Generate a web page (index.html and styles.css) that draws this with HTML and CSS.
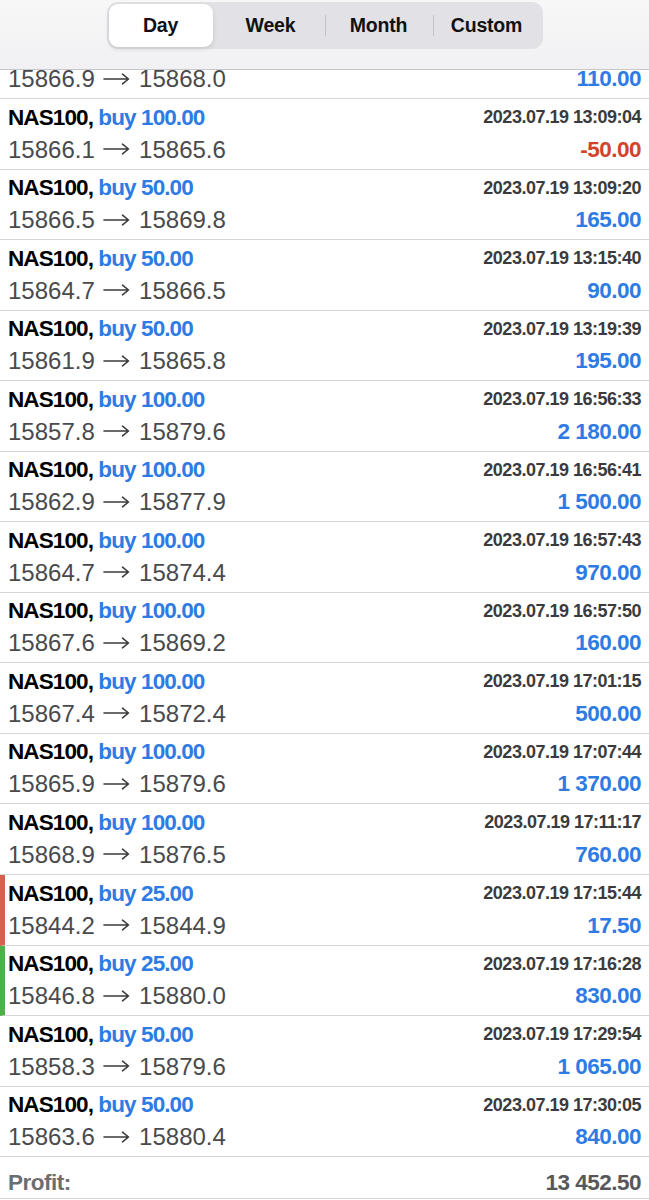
FILE: index.html
```html
<!DOCTYPE html>
<html lang="en">

<head>
    <meta charset="UTF-8">
    <meta name="viewport" content="width=device-width, initial-scale=1.0">
    <title>History</title>
    <link rel="stylesheet" href="styles.css">
</head>

<body>
    <div class="topbar">
        <div class="segments">
            <div class="segment active">Day</div>
            <div class="segment">Week</div>
            <div class="segment sep">Month</div>
            <div class="segment sep">Custom</div>
        </div>
    </div>

    <div class="list" id="list">
        <!-- top of this deal is scrolled under the bar -->
        <div class="deal partial">
            <div class="prices">15866.9 <span class="arrow"></span> 15868.0</div>
            <div class="profit">110.00</div>
        </div>
        <div class="deal">
            <div class="symbol">NAS100, <span class="side">buy 100.00</span></div>
            <div class="time">2023.07.19 13:09:04</div>
            <div class="prices">15866.1 <span class="arrow"></span> 15865.6</div>
            <div class="profit loss">-50.00</div>
        </div>
        <div class="deal">
            <div class="symbol">NAS100, <span class="side">buy 50.00</span></div>
            <div class="time">2023.07.19 13:09:20</div>
            <div class="prices">15866.5 <span class="arrow"></span> 15869.8</div>
            <div class="profit">165.00</div>
        </div>
        <div class="deal">
            <div class="symbol">NAS100, <span class="side">buy 50.00</span></div>
            <div class="time">2023.07.19 13:15:40</div>
            <div class="prices">15864.7 <span class="arrow"></span> 15866.5</div>
            <div class="profit">90.00</div>
        </div>
        <div class="deal">
            <div class="symbol">NAS100, <span class="side">buy 50.00</span></div>
            <div class="time">2023.07.19 13:19:39</div>
            <div class="prices">15861.9 <span class="arrow"></span> 15865.8</div>
            <div class="profit">195.00</div>
        </div>
        <div class="deal">
            <div class="symbol">NAS100, <span class="side">buy 100.00</span></div>
            <div class="time">2023.07.19 16:56:33</div>
            <div class="prices">15857.8 <span class="arrow"></span> 15879.6</div>
            <div class="profit">2 180.00</div>
        </div>
        <div class="deal">
            <div class="symbol">NAS100, <span class="side">buy 100.00</span></div>
            <div class="time">2023.07.19 16:56:41</div>
            <div class="prices">15862.9 <span class="arrow"></span> 15877.9</div>
            <div class="profit">1 500.00</div>
        </div>
        <div class="deal">
            <div class="symbol">NAS100, <span class="side">buy 100.00</span></div>
            <div class="time">2023.07.19 16:57:43</div>
            <div class="prices">15864.7 <span class="arrow"></span> 15874.4</div>
            <div class="profit">970.00</div>
        </div>
        <div class="deal">
            <div class="symbol">NAS100, <span class="side">buy 100.00</span></div>
            <div class="time">2023.07.19 16:57:50</div>
            <div class="prices">15867.6 <span class="arrow"></span> 15869.2</div>
            <div class="profit">160.00</div>
        </div>
        <div class="deal">
            <div class="symbol">NAS100, <span class="side">buy 100.00</span></div>
            <div class="time">2023.07.19 17:01:15</div>
            <div class="prices">15867.4 <span class="arrow"></span> 15872.4</div>
            <div class="profit">500.00</div>
        </div>
        <div class="deal">
            <div class="symbol">NAS100, <span class="side">buy 100.00</span></div>
            <div class="time">2023.07.19 17:07:44</div>
            <div class="prices">15865.9 <span class="arrow"></span> 15879.6</div>
            <div class="profit">1 370.00</div>
        </div>
        <div class="deal">
            <div class="symbol">NAS100, <span class="side">buy 100.00</span></div>
            <div class="time">2023.07.19 17:11:17</div>
            <div class="prices">15868.9 <span class="arrow"></span> 15876.5</div>
            <div class="profit">760.00</div>
        </div>
        <div class="deal mark-red">
            <div class="symbol">NAS100, <span class="side">buy 25.00</span></div>
            <div class="time">2023.07.19 17:15:44</div>
            <div class="prices">15844.2 <span class="arrow"></span> 15844.9</div>
            <div class="profit">17.50</div>
        </div>
        <div class="deal mark-green">
            <div class="symbol">NAS100, <span class="side">buy 25.00</span></div>
            <div class="time">2023.07.19 17:16:28</div>
            <div class="prices">15846.8 <span class="arrow"></span> 15880.0</div>
            <div class="profit">830.00</div>
        </div>
        <div class="deal">
            <div class="symbol">NAS100, <span class="side">buy 50.00</span></div>
            <div class="time">2023.07.19 17:29:54</div>
            <div class="prices">15858.3 <span class="arrow"></span> 15879.6</div>
            <div class="profit">1 065.00</div>
        </div>
        <div class="deal">
            <div class="symbol">NAS100, <span class="side">buy 50.00</span></div>
            <div class="time">2023.07.19 17:30:05</div>
            <div class="prices">15863.6 <span class="arrow"></span> 15880.4</div>
            <div class="profit">840.00</div>
        </div>
        <div class="total">
            <span class="total-label">Profit:</span>
            <span class="total-value">13 452.50</span>
        </div>
    </div>

    <script>
        // same thin arrow in every price line
        const arrowSvg = '<svg width="27" height="12" viewBox="0 0 27 12" fill="none" stroke="#3a3a3c" stroke-width="1.6" stroke-linecap="round" stroke-linejoin="round"><path d="M1 6 H25.5 M19.5 1.2 L25.5 6 L19.5 10.8"/></svg>';
        document.querySelectorAll('#list .arrow').forEach(el => {
            el.innerHTML = arrowSvg;
        });
    </script>
</body>

</html>
```

FILE: styles.css
```css
* {
    margin: 0;
    padding: 0;
    box-sizing: border-box;
}

body {
    font-family: 'Liberation Sans', Arial, sans-serif;
    background: #fff;
    color: #000;
    width: 649px;
    height: 1200px;
    overflow: hidden;
}

.topbar {
    height: 70px;
    background: linear-gradient(180deg, #f7f7f8 0%, #f1f1f3 100%);
    border-bottom: 1px solid #c8c8cc;
    display: flex;
    justify-content: center;
    padding-top: 2px;
}

.segments {
    width: 436px;
    height: 47px;
    background: #e2e2e6;
    border-radius: 11px;
    padding: 2px;
    display: grid;
    grid-template-columns: repeat(4, 1fr);
}

.segment {
    display: flex;
    align-items: center;
    justify-content: center;
    font-size: 19.5px;
    font-weight: bold;
    letter-spacing: -0.2px;
    color: #111;
    position: relative;
}

.segment.sep::before {
    content: "";
    position: absolute;
    left: 0;
    top: 11px;
    bottom: 11px;
    width: 1px;
    background: #c4c4c8;
}

.segment.active {
    background: #fff;
    border-radius: 9px;
    box-shadow: 0 2px 5px rgba(0, 0, 0, 0.12);
    margin-right: 4px;
}

.deal {
    height: 70.55px;
    border-bottom: 1px solid #d6d6d8;
    display: grid;
    grid-template-columns: 1fr auto;
    grid-template-rows: 31px 33px;
    padding: 3px 8px 0 8px;
    align-items: center;
}

.deal.partial {
    height: 29px;
    grid-template-rows: 17px;
    padding-top: 0;
    line-height: 17px;
}

.mark-red {
    border-left: 5px solid #d4604f;
    padding-left: 3px;
}

.mark-green {
    border-left: 5px solid #4fb04a;
    padding-left: 3px;
}

.symbol {
    font-size: 22.5px;
    font-weight: bold;
    letter-spacing: -0.9px;
    white-space: nowrap;
}

.side {
    color: #2e7be4;
}

.time {
    font-size: 18px;
    font-weight: bold;
    letter-spacing: -0.5px;
    color: #3b3b3d;
    text-align: right;
}

.prices {
    font-size: 24px;
    color: #4a4a4c;
    white-space: nowrap;
}

.arrow {
    display: inline-block;
    width: 27px;
    height: 12px;
    margin: 0 2px;
    vertical-align: 2.5px;
}

.arrow svg {
    display: block;
}

.profit {
    font-size: 22.5px;
    font-weight: bold;
    letter-spacing: -0.5px;
    color: #2e7be4;
    text-align: right;
}

.profit.loss {
    color: #d2432c;
}

.total {
    height: 42px;
    border-bottom: 1px solid #d6d6d8;
    display: flex;
    justify-content: space-between;
    align-items: center;
    padding: 10px 8px 0 8px;
    font-size: 22.5px;
    font-weight: bold;
    letter-spacing: -0.5px;
}

.total-label {
    color: #6d6d6f;
}

.total-value {
    color: #58585a;
}
```
